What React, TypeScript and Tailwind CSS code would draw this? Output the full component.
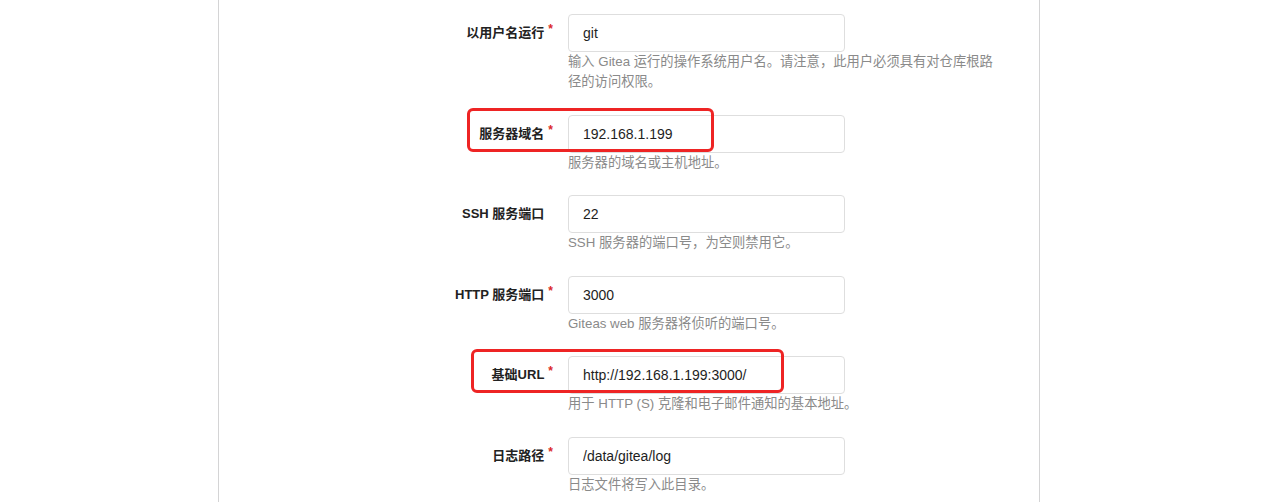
import React from "react";

type Field = {
  label: string;
  value: string;
  help: string;
  required: boolean;
  mark?: string;
};

const fields: Field[] = [
  {
    label: "以用户名运行",
    value: "git",
    help: "输入 Gitea 运行的操作系统用户名。请注意，此用户必须具有对仓库根路径的访问权限。",
    required: true,
  },
  {
    label: "服务器域名",
    value: "192.168.1.199",
    help: "服务器的域名或主机地址。",
    required: true,
    mark: "left-[248px] w-[247px]",
  },
  { label: "SSH 服务端口", value: "22", help: "SSH 服务器的端口号，为空则禁用它。", required: false },
  { label: "HTTP 服务端口", value: "3000", help: "Giteas web 服务器将侦听的端口号。", required: true },
  {
    label: "基础URL",
    value: "http://192.168.1.199:3000/",
    help: "用于 HTTP (S) 克隆和电子邮件通知的基本地址。",
    required: true,
    mark: "left-[252px] w-[313px]",
  },
  { label: "日志路径", value: "/data/gitea/log", help: "日志文件将写入此目录。", required: true },
];

export default function App() {
  return (
    <div
      className="w-screen h-[502px] bg-white overflow-hidden"
      style={{ fontFamily: '"Liberation Sans", "Noto Sans CJK SC", sans-serif' }}
    >
      <div className="ml-[218px] w-[822px] h-full border-x border-[#d4d4d5] pt-[14px]">
        {fields.map((f) => (
          <div key={f.label} className="relative mb-[22.5px]">
            {/* annotation box */}
            {f.mark && (
              <div
                className={`absolute -top-[7px] h-[44px] border-[3px] border-[#ee2424] rounded-[6px] pointer-events-none z-10 ${f.mark}`}
              />
            )}
            <div className="flex items-center">
              <label className="w-[334px] pr-[15px] box-content flex justify-end text-[13px] font-bold text-[#222]">
                <span>{f.label}</span>
                <span className={`ml-[4px] -mt-[2px] text-[12px] leading-[16px] text-[#db2828] ${f.required ? "" : "invisible"}`}>*</span>
              </label>
              <input
                readOnly
                value={f.value}
                className="w-[277px] h-[38px] px-[14px] text-[14px] text-[#1e1e1e] border border-[#dedede] rounded-[4px] outline-none bg-white"
              />
            </div>
            <p className="ml-[349px] max-w-[432px] text-[13.3px] leading-[20px] text-[#8a8a8a]">
              {f.help}
            </p>
          </div>
        ))}
      </div>
    </div>
  );
}
